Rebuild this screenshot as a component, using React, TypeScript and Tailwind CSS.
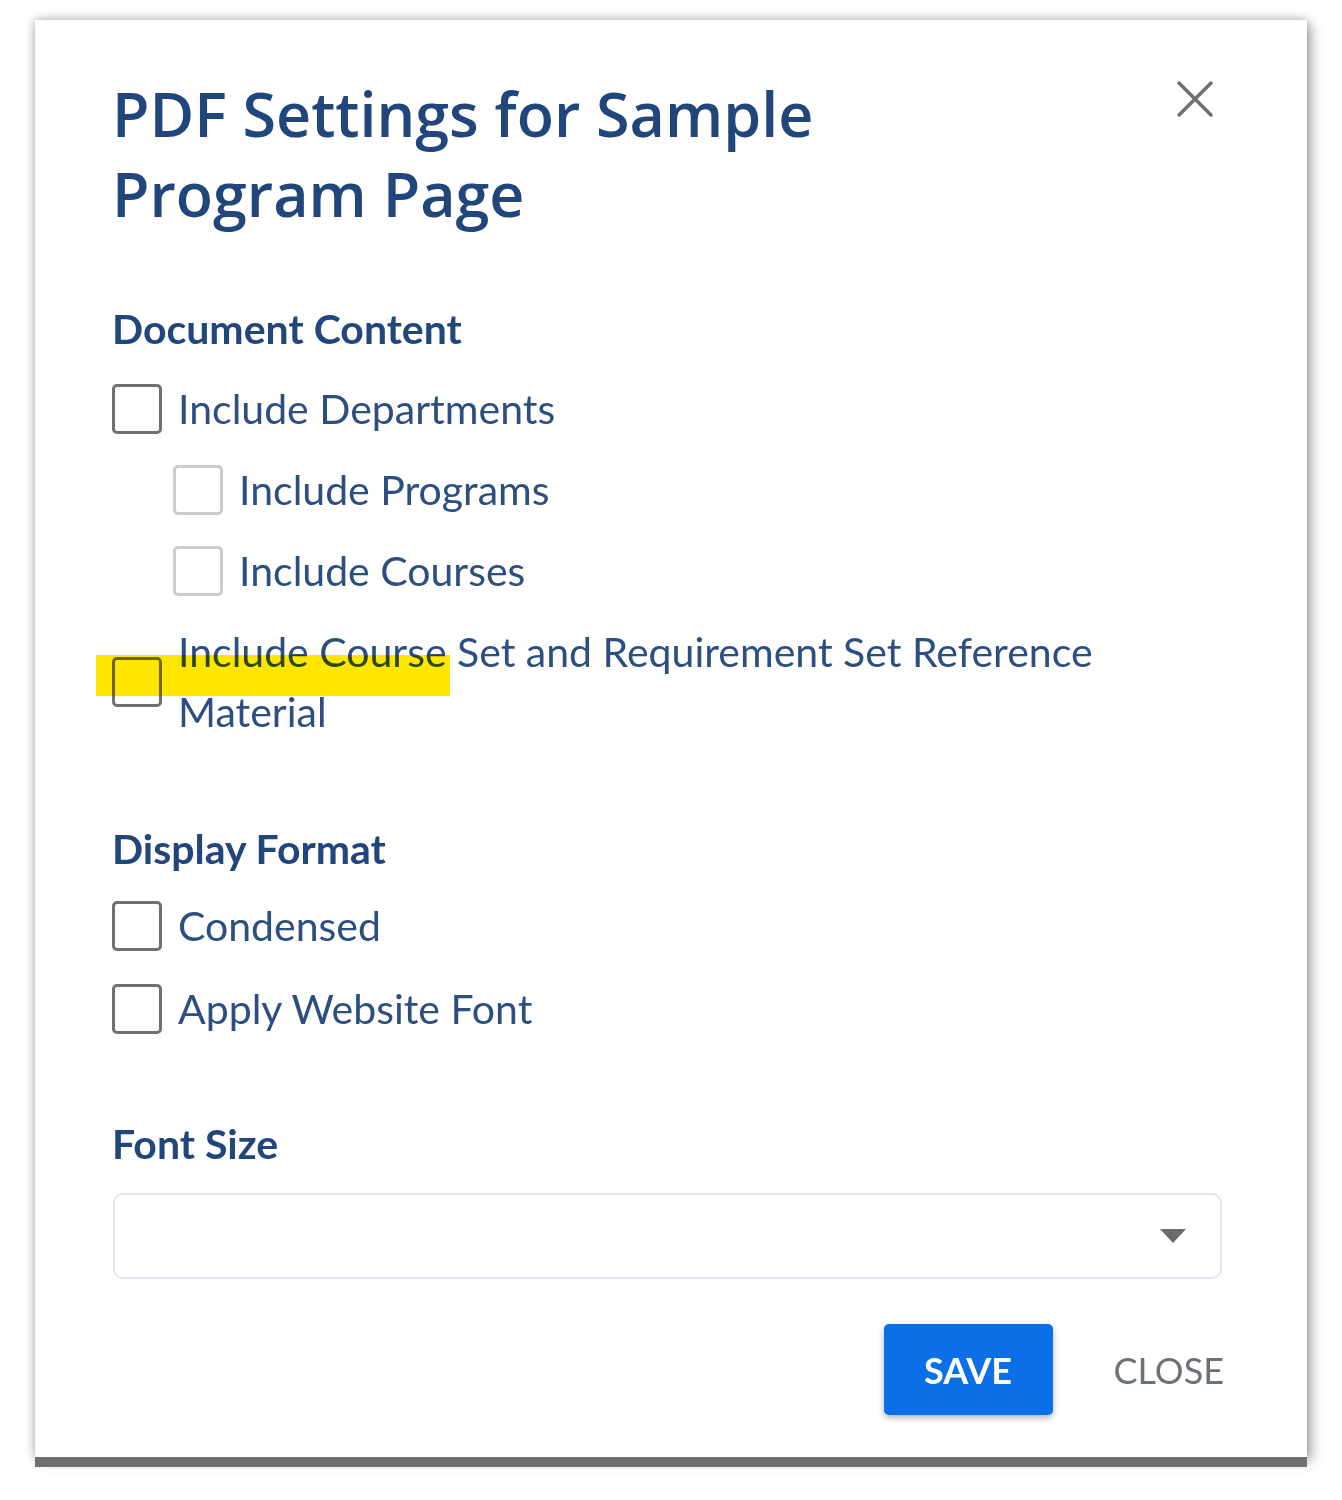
import React, { useState } from 'react';

type Opt = { id: string; label: string; nested?: boolean };

const contentOpts: Opt[] = [
  { id: 'departments', label: 'Include Departments' },
  { id: 'programs', label: 'Include Programs', nested: true },
  { id: 'courses', label: 'Include Courses', nested: true },
];

function CheckBox({ checked, light, onClick }: { checked: boolean; light?: boolean; onClick: () => void }) {
  return (
    <button
      type="button"
      onClick={onClick}
      className={`shrink-0 w-[50px] h-[50px] rounded-[5px] border-[3px] bg-white flex items-center justify-center ${
        light ? 'border-[#cccccc]' : 'border-[#707070]'
      }`}
    >
      {checked && (
        <svg width="30" height="30" viewBox="0 0 24 24" fill="none" stroke="#21467c" strokeWidth="3">
          <path d="M4 12l5 5L20 6" />
        </svg>
      )}
    </button>
  );
}

export default function App() {
  const [checked, setChecked] = useState<Record<string, boolean>>({});
  const toggle = (id: string) => setChecked(prev => ({ ...prev, [id]: !prev[id] }));

  return (
    <div className="min-h-[1500px] bg-white pt-[20px] pl-[35px] font-['Lato',sans-serif]">
      <div className="w-[1272px] bg-white pl-[77px] pr-[85px] pt-[54px] pb-[42px] shadow-[0_10px_0_0_#707070,0_0_10px_rgba(0,0,0,0.35),6px_6px_12px_rgba(0,0,0,0.2)]">
        {/* Header */}
        <div className="flex justify-between items-start">
          <h1 className="max-w-[900px] text-[61px] leading-[80px] font-semibold text-[#21467c] font-['Open_Sans',sans-serif]">
            PDF Settings for Sample Program Page
          </h1>
          <button type="button" className="w-[54px] h-[54px] -mt-[2px] flex items-center justify-center">
            <svg width="38" height="38" viewBox="0 0 38 38" fill="none" stroke="#6f6f6f" strokeWidth="3.5" strokeLinecap="round">
              <path d="M3 3L35 35M35 3L3 35" />
            </svg>
          </button>
        </div>

        {/* Document Content */}
        <h2 className="mt-[71px] text-[41px] leading-[48px] font-bold text-[#21467c]">Document Content</h2>
        <div className="flex flex-col mt-[26px] gap-[21px]">
          {contentOpts.map(o => (
            <div key={o.id} className={`flex items-center gap-[16px] ${o.nested ? 'ml-[61px]' : ''}`}>
              <CheckBox light={o.nested} checked={!!checked[o.id]} onClick={() => toggle(o.id)} />
              <span className="text-[41px] leading-[60px] text-[#2c4e80]">{o.label}</span>
            </div>
          ))}
          <div className="relative flex items-center gap-[16px]">
            <CheckBox checked={!!checked.reference} onClick={() => toggle('reference')} />
            <span className="max-w-[960px] text-[41px] leading-[60px] text-[#2c4e80]">
              Include Course Set and Requirement Set Reference Material
            </span>
            {/* highlighter mark */}
            <div className="absolute left-[-16px] top-[33px] w-[354px] h-[41px] bg-[#ffe600] mix-blend-multiply pointer-events-none" />
          </div>
        </div>

        {/* Display Format */}
        <h2 className="mt-[83px] text-[41px] leading-[48px] font-bold text-[#21467c]">Display Format</h2>
        <div className="flex flex-col mt-[23px] gap-[23px]">
          {[
            { id: 'condensed', label: 'Condensed' },
            { id: 'font', label: 'Apply Website Font' },
          ].map(o => (
            <div key={o.id} className="flex items-center gap-[16px]">
              <CheckBox checked={!!checked[o.id]} onClick={() => toggle(o.id)} />
              <span className="text-[41px] leading-[60px] text-[#2c4e80]">{o.label}</span>
            </div>
          ))}
        </div>

        {/* Font Size */}
        <h2 className="mt-[81px] text-[41px] leading-[48px] font-bold text-[#21467c]">Font Size</h2>
        <div className="mt-[25px] h-[86px] ml-[1px] rounded-[10px] border-2 border-[#dfe6ef] bg-white flex items-center justify-end pr-[34px]">
          <svg width="26" height="14" viewBox="0 0 26 14">
            <path d="M0 0H26L13 14Z" fill="#6b6b6b" />
          </svg>
        </div>

        {/* Actions */}
        <div className="mt-[45px] flex justify-end items-center">
          <button
            type="button"
            className="w-[169px] h-[91px] rounded-[5px] bg-[#0b6fe8] text-white text-[36px] font-bold shadow-[0_3px_6px_rgba(0,0,0,0.3)]"
          >
            SAVE
          </button>
          <button type="button" className="ml-[61px] mr-[-2px] text-[36px] text-[#6c7077]">
            CLOSE
          </button>
        </div>
      </div>
    </div>
  );
}
